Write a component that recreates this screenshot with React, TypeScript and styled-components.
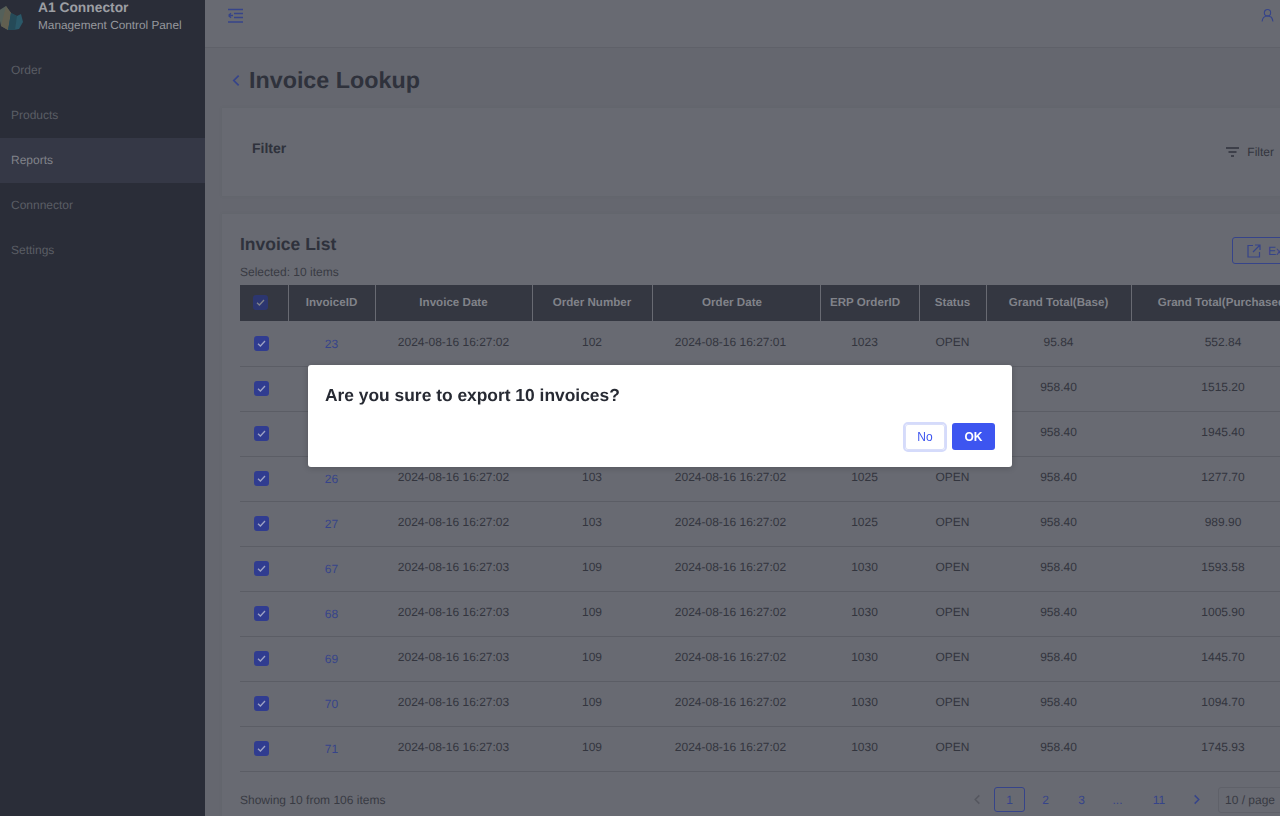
import React from "react";
import styled, { createGlobalStyle } from "styled-components";

const Global = createGlobalStyle`
  html, body { margin: 0; padding: 0; height: 100%; overflow: hidden; background: #65676f; }
  #root { height: 100%; }
  * { box-sizing: border-box; }
  body { text-rendering: geometricPrecision; }
`;

const Shell = styled.div`
  display: flex;
  width: 1280px;
  height: 816px;
  overflow: hidden;
  font-family: "Liberation Sans", Arial, sans-serif;
  background: #65676f;
`;

const Sidebar = styled.aside`
  flex: 0 0 205px;
  background: #2a2d38;
  overflow: hidden;
`;
const Brand = styled.div`
  display: flex;
  align-items: flex-start;
  gap: 15px;
  height: 48px;
  margin-left: -2px;
`;
const BrandText = styled.div`
  display: flex;
  flex-direction: column;
`;
const BrandName = styled.div`
  font-size: 13.8px;
  line-height: 16px;
  font-weight: 700;
  color: #9c9ea3;
`;
const BrandSub = styled.div`
  font-size: 11.8px;
  line-height: 18px;
  color: #96989d;
`;
const Logo = styled.svg`
  margin-top: 4px;
  flex: none;
`;
const NavItem = styled.div<{ $active?: boolean }>`
  height: 45px;
  padding: 0 11px 1px;
  display: flex;
  align-items: center;
  font-size: 12px;
  color: ${(p) => (p.$active ? "#81838a" : "#5a5d65")};
  background: ${(p) => (p.$active ? "#353846" : "transparent")};
`;

const Main = styled.main`
  flex: 1;
  min-width: 0;
  overflow: hidden;
`;
const TopBar = styled.header`
  height: 48px;
  background: #686a72;
  border-bottom: 1px solid #5f6169;
  display: flex;
  justify-content: space-between;
  padding: 8px 6px 0 22px;
`;
const TitleRow = styled.div`
  height: 60px;
  padding: 4px 0 0 25px;
  display: flex;
  align-items: center;
  gap: 6px;
`;
const Title = styled.h1`
  margin: 0;
  font-size: 23.3px;
  line-height: 30px;
  font-weight: 700;
  color: #2f323c;
`;
const Card = styled.section`
  width: 1111px;
  margin-left: 17px;
  background: #686a72;
  box-shadow: 0 0 2px #61636b;
`;
const FilterCard = styled(Card)`
  height: 88px;
  margin-bottom: 18px;
  padding: 31px 59px 0 30px;
  display: flex;
  justify-content: space-between;
`;
const FilterTitle = styled.h3`
  margin: 0;
  font-size: 14px;
  line-height: 18px;
  font-weight: 700;
  color: #2f323c;
`;
const FilterToggle = styled.div`
  display: flex;
  align-items: center;
  gap: 7px;
  height: 16px;
  margin-top: 5px;
  font-size: 12px;
  color: #33353e;
`;
const ListCard = styled(Card)`
  padding: 19px 18px 0;
`;
const ListHead = styled.div`
  display: flex;
  justify-content: space-between;
  align-items: flex-start;
  height: 52px;
`;
const ListHeading = styled.div`
  display: flex;
  flex-direction: column;
`;
const ListTitle = styled.h2`
  margin: 0;
  font-size: 17.5px;
  line-height: 22px;
  font-weight: 700;
  color: #2f323c;
`;
const Selected = styled.div`
  margin-top: 9px;
  font-size: 12px;
  line-height: 16px;
  color: #383a43;
`;
const ExportButton = styled.div`
  width: 83px;
  height: 27px;
  margin-top: 4px;
  border: 1px solid #36448a;
  border-radius: 3px;
  display: flex;
  align-items: center;
  gap: 7px;
  padding-left: 14px;
  font-size: 12px;
  color: #36448a;
`;

const Table = styled.table`
  width: 1075px;
  table-layout: fixed;
  border-collapse: collapse;
  font-size: 12px;
`;
const Th = styled.th<{ $right?: number }>`
  height: 36px;
  padding: 0 ${(p) => p.$right ?? 0}px 1px 0;
  background: #343741;
  color: #81838a;
  font-weight: 700;
  font-size: 11.6px;
  text-align: center;
  border-left: 1px solid #686a72;
  white-space: nowrap;
  overflow: hidden;
  &:first-child { border-left: none; padding-right: 6px; }
`;
const Tr = styled.tr`
  height: 45px;
  border-bottom: 1px solid #5b5d65;
`;
const Td = styled.td<{ $right?: number }>`
  padding: 0 ${(p) => p.$right ?? 0}px 3px 0;
  text-align: center;
  color: #33353e;
  white-space: nowrap;
`;
const LinkCell = styled(Td)`
  padding: 1px 0 0;
  color: #36448a;
`;
const BoxCell = styled(Td)`
  padding: 0 6px 0 0;
`;
const Check = styled.span<{ $head?: boolean }>`
  display: inline-flex;
  align-items: center;
  justify-content: center;
  vertical-align: middle;
  width: 15px;
  height: 15px;
  border-radius: 3px;
  background: ${(p) => (p.$head ? "#2c3670" : "#303c90")};
`;

const Footer = styled.div`
  display: flex;
  align-items: center;
  justify-content: space-between;
  height: 57px;
  padding-bottom: 1px;
  font-size: 12px;
  color: #383a43;
`;
const Pager = styled.div`
  display: flex;
  align-items: center;
  gap: 5px;
  color: #36448a;
`;
const PageItem = styled.div<{ $active?: boolean }>`
  width: 31px;
  height: 25px;
  display: flex;
  align-items: center;
  justify-content: center;
  border: 1px solid ${(p) => (p.$active ? "#36448a" : "transparent")};
  border-radius: 3px;
  font-size: 12px;
`;
const LastPage = styled(PageItem)`
  width: 36px;
  margin-left: 3px;
`;
const PrevArrow = styled(PageItem)`
  width: 24px;
`;
const NextArrow = styled(PageItem)`
  width: 28px;
`;
const PageSelect = styled.div`
  width: 97px;
  height: 26px;
  margin-left: 3px;
  border: 1px solid #5f6169;
  border-radius: 3px;
  padding-left: 6px;
  display: flex;
  align-items: center;
  font-size: 12px;
  color: #383a43;
`;

const Dialog = styled.div`
  position: fixed;
  left: 308px;
  top: 365px;
  width: 704px;
  height: 102px;
  padding: 20px 17px 0;
  background: #fff;
  border-radius: 3px;
  box-shadow: 0 1px 6px rgba(0, 0, 0, 0.2);
  font-family: "Liberation Sans", Arial, sans-serif;
`;
const DialogText = styled.div`
  font-size: 17.4px;
  line-height: 20px;
  font-weight: 700;
  color: #272a33;
`;
const DialogActions = styled.div`
  display: flex;
  justify-content: flex-end;
  align-items: center;
  gap: 7px;
  margin-top: 18px;
`;
const NoButton = styled.button`
  width: 40px;
  height: 26px;
  border: 1px solid #d9def9;
  outline: 2px solid #d5dbfb;
  border-radius: 3px;
  background: #fff;
  color: #3d55f0;
  font: 400 12px "Liberation Sans", Arial, sans-serif;
  padding: 0;
`;
const OkButton = styled.button`
  width: 43px;
  height: 27px;
  border: none;
  border-radius: 3px;
  background: #3d55f0;
  color: #fff;
  font: 700 12px "Liberation Sans", Arial, sans-serif;
  padding: 0;
`;

const rows = [
  ["23", "2024-08-16 16:27:02", "102", "2024-08-16 16:27:01", "1023", "95.84", "552.84"],
  ["24", "2024-08-16 16:27:02", "102", "2024-08-16 16:27:01", "1023", "958.40", "1515.20"],
  ["25", "2024-08-16 16:27:02", "102", "2024-08-16 16:27:01", "1023", "958.40", "1945.40"],
  ["26", "2024-08-16 16:27:02", "103", "2024-08-16 16:27:02", "1025", "958.40", "1277.70"],
  ["27", "2024-08-16 16:27:02", "103", "2024-08-16 16:27:02", "1025", "958.40", "989.90"],
  ["67", "2024-08-16 16:27:03", "109", "2024-08-16 16:27:02", "1030", "958.40", "1593.58"],
  ["68", "2024-08-16 16:27:03", "109", "2024-08-16 16:27:02", "1030", "958.40", "1005.90"],
  ["69", "2024-08-16 16:27:03", "109", "2024-08-16 16:27:02", "1030", "958.40", "1445.70"],
  ["70", "2024-08-16 16:27:03", "109", "2024-08-16 16:27:02", "1030", "958.40", "1094.70"],
  ["71", "2024-08-16 16:27:03", "109", "2024-08-16 16:27:02", "1030", "958.40", "1745.93"],
];
const colWidths = [48, 87, 157, 120, 168, 99, 67, 145, 184];
const heads: [string, number][] = [
  ["InvoiceID", 0],
  ["Invoice Date", 0],
  ["Order Number", 0],
  ["Order Date", 8],
  ["ERP OrderID", 9],
  ["Status", 0],
  ["Grand Total(Base)", 0],
  ["Grand Total(Purchased)", 0],
];
const nav = ["Order", "Products", "Reports", "Connnector", "Settings"];

const Tick = ({ color }: { color: string }) => (
  <svg width="11" height="11" viewBox="0 0 11 11" fill="none">
    <path d="M2 5.800 4.400 8 9 3" stroke={color} strokeWidth="1.300" />
  </svg>
);
const Chevron = ({ dir, color, size = 12 }: { dir: "l" | "r"; color: string; size?: number }) => (
  <svg width={size} height={size} viewBox="0 0 12 12" fill="none">
    <path d={dir === "l" ? "M8 1.500 3.500 6 8 10.500" : "M4 1.500 8.500 6 4 10.500"} stroke={color} strokeWidth="1.600" />
  </svg>
);

export default function App() {
  return (
    <Shell>
      <Global />
      <Sidebar>
        <Brand>
          <Logo width="25" height="26" viewBox="0 0 25 26">
            <polygon points="0,7 8,2 13,9 10,26 3,22" fill="#54605a" />
            <polygon points="8,2 13,9 10,26 3,22" fill="#615f50" />
            <polygon points="13,9 19,12 23,10 25,18 21,25 10,27" fill="#2a5868" />
            <polygon points="13,9 19,12 17,26 10,27" fill="#254a58" />
          </Logo>
          <BrandText>
            <BrandName>A1 Connector</BrandName>
            <BrandSub>Management Control Panel</BrandSub>
          </BrandText>
        </Brand>
        {nav.map((n) => (
          <NavItem key={n} $active={n === "Reports"}>{n}</NavItem>
        ))}
      </Sidebar>
      <Main>
        <TopBar>
          <svg width="17" height="16" viewBox="0 0 17 16" fill="none" stroke="#36448a" strokeWidth="1.300">
            <path d="M1 1.500h15M7 5.500h9M7 9.500h9M1 14h15M1.500 7.500h4.500M1.500 7.500l2.500-2.200M1.500 7.500l2.500 2.200" />
          </svg>
          <svg width="13" height="15" viewBox="0 0 14 15" fill="none" stroke="#36448a" strokeWidth="1.200">
            <circle cx="7" cy="4.500" r="3.400" />
            <path d="M1.200 14c.3-3.600 2.600-6 5.800-6s5.500 2.400 5.800 6" />
          </svg>
        </TopBar>
        <TitleRow>
          <Chevron dir="l" color="#36448a" size={13} />
          <Title>Invoice Lookup</Title>
        </TitleRow>
        <FilterCard>
          <FilterTitle>Filter</FilterTitle>
          <FilterToggle>
            <svg width="15" height="12" viewBox="0 0 15 12" fill="none" stroke="#2f323c" strokeWidth="1.300">
              <path d="M1 2h13M3.500 6h8M6 10h3" />
            </svg>
            Filter
          </FilterToggle>
        </FilterCard>
        <ListCard>
          <ListHead>
            <ListHeading>
              <ListTitle>Invoice List</ListTitle>
              <Selected>Selected: 10 items</Selected>
            </ListHeading>
            <ExportButton>
              <svg width="14" height="14" viewBox="0 0 14 14" fill="none" stroke="#36448a" strokeWidth="1.200">
                <path d="M6 1.500H1v11.500h11.500V8M8 1h5v5M13 1 6 8" />
              </svg>
              Export
            </ExportButton>
          </ListHead>
          <Table>
            <colgroup>
              {colWidths.map((w, i) => (
                <col key={i} style={{ width: w }} />
              ))}
            </colgroup>
            <thead>
              <tr>
                <Th>
                  <Check $head><Tick color="#81838a" /></Check>
                </Th>
                {heads.map(([h, right]) => (
                  <Th key={h} $right={right}>{h}</Th>
                ))}
              </tr>
            </thead>
            <tbody>
              {rows.map((r) => (
                <Tr key={r[0]}>
                  <BoxCell>
                    <Check><Tick color="#9ea3c4" /></Check>
                  </BoxCell>
                  <LinkCell>{r[0]}</LinkCell>
                  <Td>{r[1]}</Td>
                  <Td>{r[2]}</Td>
                  <Td $right={11}>{r[3]}</Td>
                  <Td $right={10}>{r[4]}</Td>
                  <Td>OPEN</Td>
                  <Td>{r[5]}</Td>
                  <Td>{r[6]}</Td>
                </Tr>
              ))}
            </tbody>
          </Table>
          <Footer>
            <span>Showing 10 from 106 items</span>
            <Pager>
              <PrevArrow><Chevron dir="l" color="#55575f" size={11} /></PrevArrow>
              <PageItem $active>1</PageItem>
              <PageItem>2</PageItem>
              <PageItem>3</PageItem>
              <PageItem>...</PageItem>
              <LastPage>11</LastPage>
              <NextArrow><Chevron dir="r" color="#36448a" size={11} /></NextArrow>
              <PageSelect>10 / page</PageSelect>
            </Pager>
          </Footer>
        </ListCard>
      </Main>
      <Dialog>
        <DialogText>Are you sure to export 10 invoices?</DialogText>
        <DialogActions>
          <NoButton>No</NoButton>
          <OkButton>OK</OkButton>
        </DialogActions>
      </Dialog>
    </Shell>
  );
}
